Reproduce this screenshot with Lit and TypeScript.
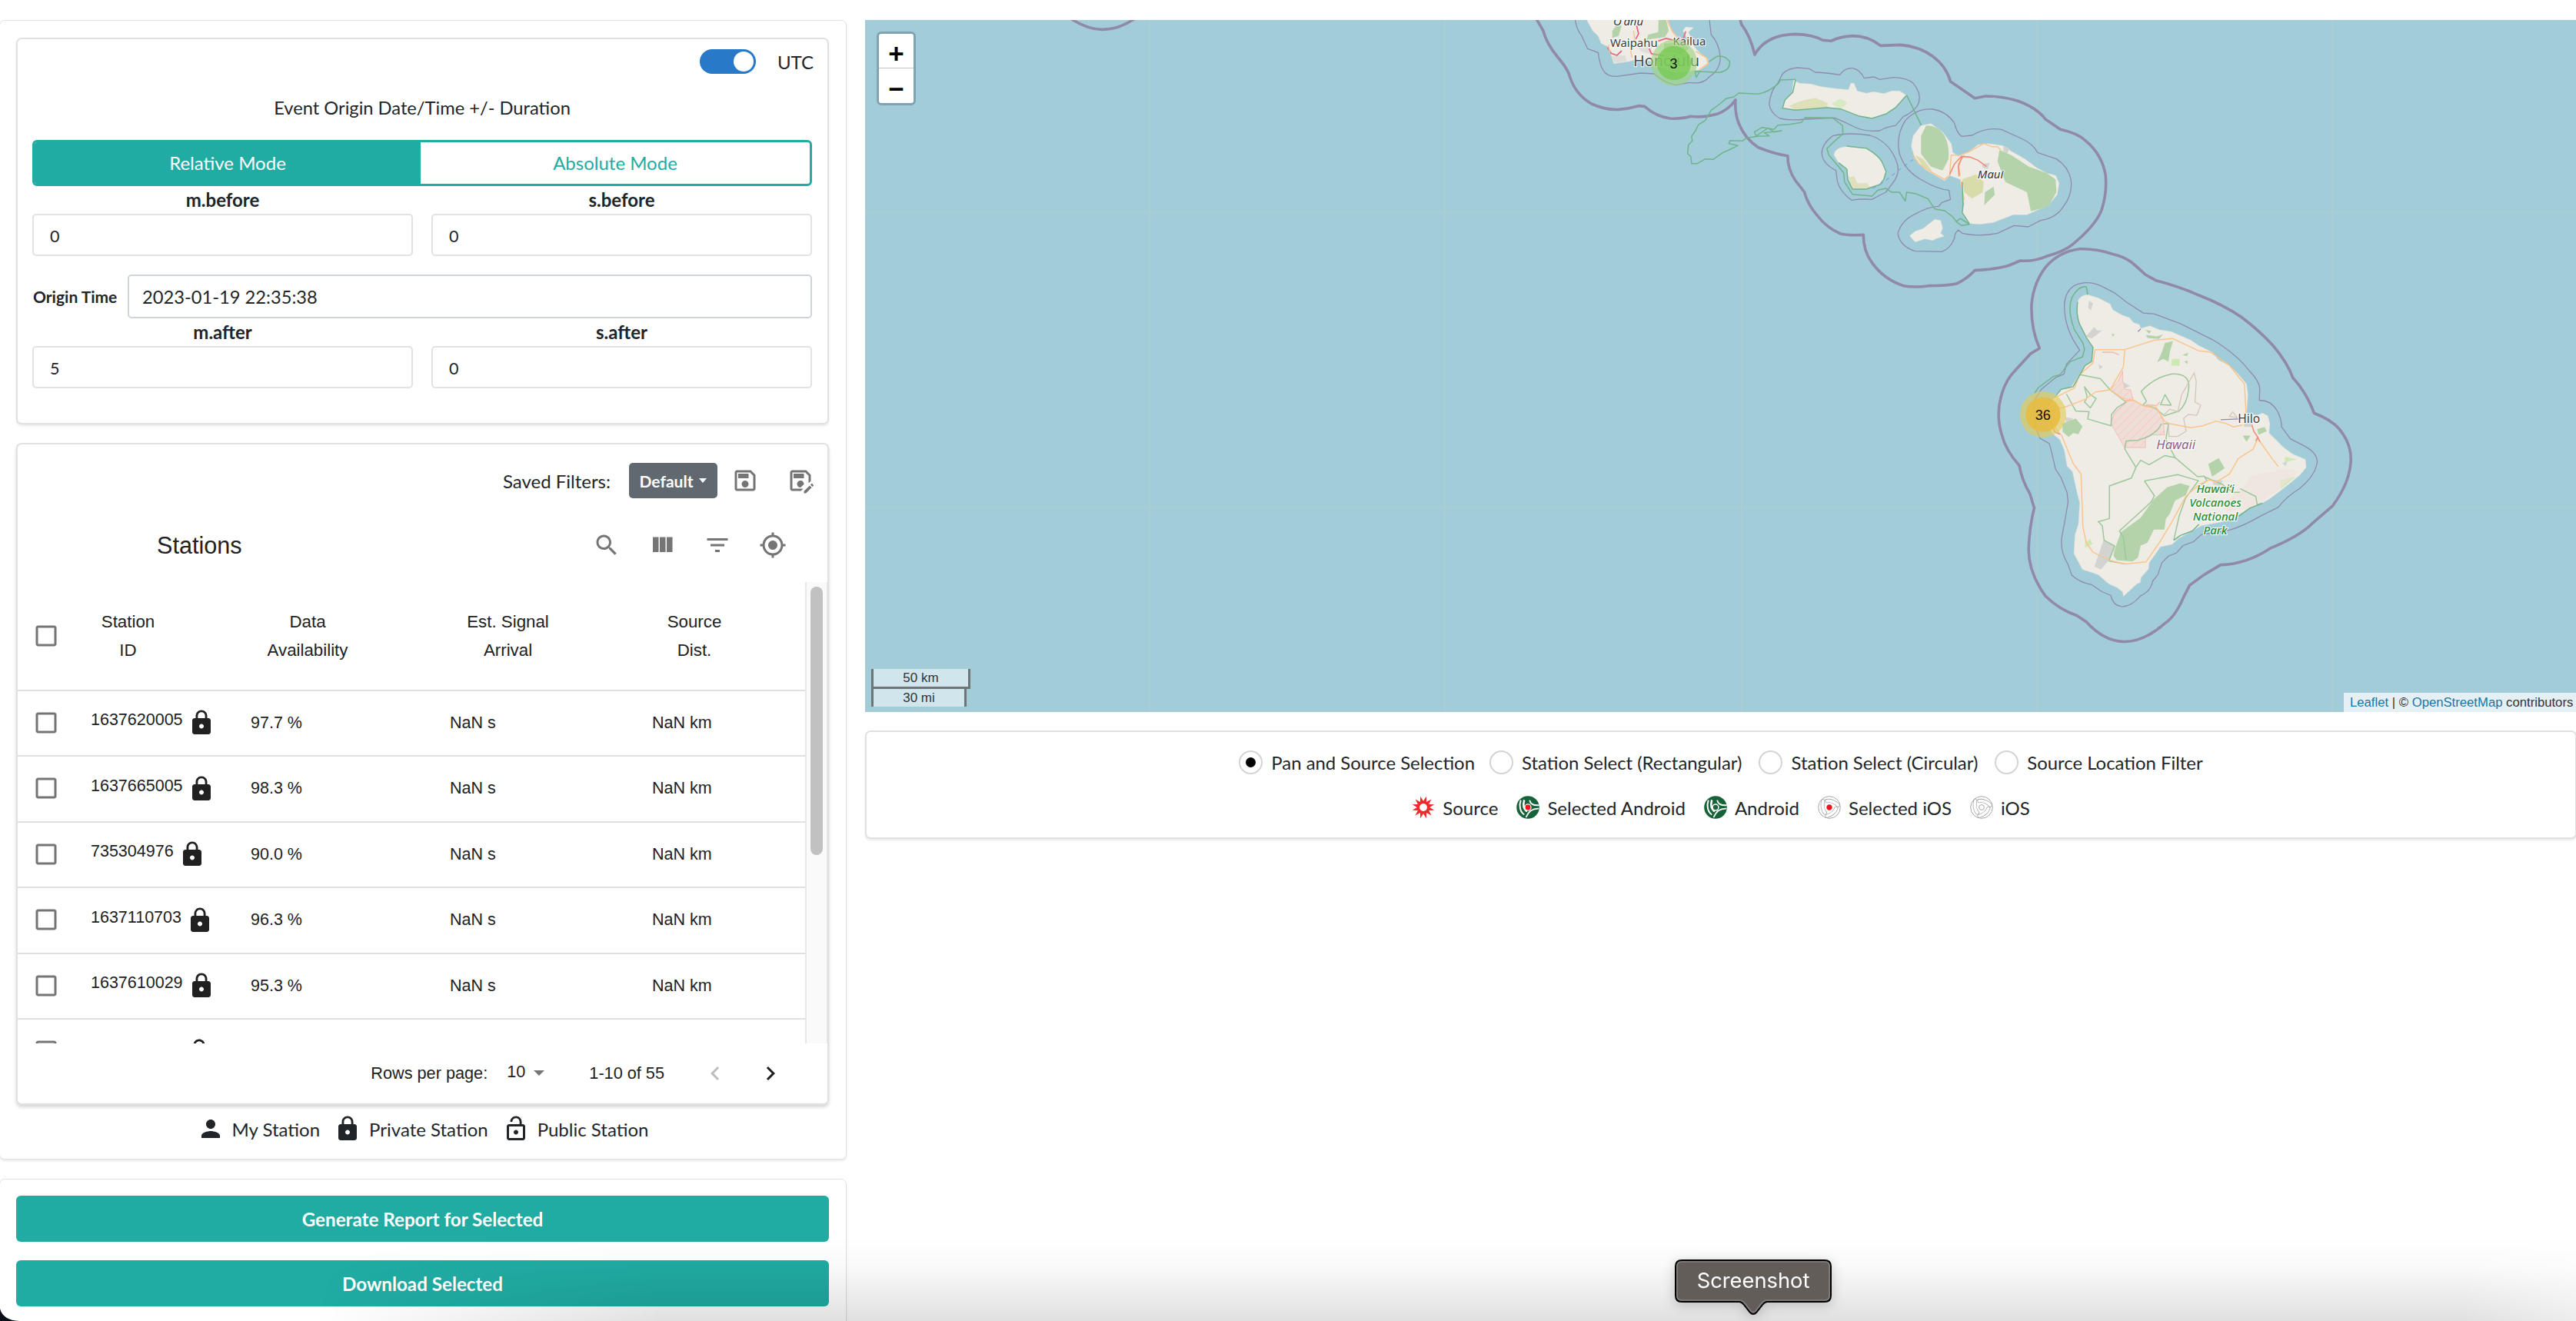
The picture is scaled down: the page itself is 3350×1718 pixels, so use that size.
import { LitElement, html, svg, css } from "lit";
import { customElement } from "lit/decorators.js";

const ICON = {
  save: "M17 3H5c-1.11 0-2 .9-2 2v14c0 1.1.89 2 2 2h14c1.1 0 2-.9 2-2V7l-4-4zm2 16H5V5h11.17L19 7.83V19zm-7-7c-1.66 0-3 1.34-3 3s1.34 3 3 3 3-1.34 3-3-1.34-3-3-3zM6 6h9v4H6V6z",
  saveAs: "M21 12.4V7l-4-4H5c-1.11 0-2 .9-2 2v14c0 1.1.89 2 2 2h7.4l2-2H5V5h11.17L19 7.83v6.57l2-2zM15 15c0 .06 0 .11-.01.16l-2.83 2.83c-.05.01-.1.01-.16.01-1.66 0-3-1.34-3-3s1.34-3 3-3 3 1.34 3 3zM6 6h9v4H6V6zm13.99 10.25 1.77 1.77L16.77 23H15v-1.77l4.99-4.98zm3.26.26-.85.85-1.77-1.77.85-.85c.2-.2.51-.2.71 0l1.06 1.06c.2.2.2.52 0 .71z",
  search: "M15.5 14h-.79l-.28-.27C15.41 12.59 16 11.11 16 9.5 16 5.91 13.09 3 9.5 3S3 5.91 3 9.5 5.91 16 9.5 16c1.61 0 3.09-.59 4.23-1.57l.27.28v.79l5 4.99L20.49 19l-4.99-5zm-6 0C7.01 14 5 11.99 5 9.5S7.01 5 9.5 5 14 7.01 14 9.5 11.99 14 9.5 14z",
  columns: "M10 18h5V5h-5v13zm-6 0h5V5H4v13zM16 5v13h5V5h-5z",
  filter: "M10 18h4v-2h-4v2zM3 6v2h18V6H3zm3 7h12v-2H6v2z",
  gps: "M12 8c-2.21 0-4 1.79-4 4s1.79 4 4 4 4-1.79 4-4-1.79-4-4-4zm8.94 3c-.46-4.17-3.77-7.48-7.94-7.94V1h-2v2.06C6.83 3.52 3.52 6.83 3.06 11H1v2h2.06c.46 4.17 3.77 7.48 7.94 7.94V23h2v-2.06c4.17-.46 7.48-3.77 7.94-7.94H23v-2h-2.06zM12 19c-3.87 0-7-3.13-7-7s3.13-7 7-7 7 3.13 7 7-3.13 7-7 7z",
  lock: "M18 8h-1V6c0-2.76-2.24-5-5-5S7 3.24 7 6v2H6c-1.1 0-2 .9-2 2v10c0 1.1.9 2 2 2h12c1.1 0 2-.9 2-2V10c0-1.1-.9-2-2-2zm-6 9c-1.1 0-2-.9-2-2s.9-2 2-2 2 .9 2 2-.9 2-2 2zm3.1-9H8.9V6c0-1.71 1.39-3.1 3.1-3.1 1.71 0 3.1 1.39 3.1 3.1v2z",
  lockOpen: "M12 17c1.1 0 2-.9 2-2s-.9-2-2-2-2 .9-2 2 .9 2 2 2zm6-9h-1V6c0-2.76-2.24-5-5-5S7 3.24 7 6h1.9c0-1.71 1.39-3.1 3.1-3.1 1.71 0 3.1 1.39 3.1 3.1v2H6c-1.1 0-2 .9-2 2v10c0 1.1.9 2 2 2h12c1.1 0 2-.9 2-2V10c0-1.1-.9-2-2-2zm0 12H6V10h12v10z",
  person: "M12 12c2.21 0 4-1.79 4-4s-1.79-4-4-4-4 1.79-4 4 1.79 4 4 4zm0 2c-2.67 0-8 1.34-8 4v2h16v-2c0-2.66-5.33-4-8-4z",
  box: "M19 5v14H5V5h14m0-2H5c-1.1 0-2 .9-2 2v14c0 1.1.9 2 2 2h14c1.1 0 2-.9 2-2V5c0-1.1-.9-2-2-2z",
  prev: "M15.41 7.41L14 6l-6 6 6 6 1.41-1.41L10.83 12z",
  next: "M10 6L8.59 7.41 13.17 12l-4.58 4.59L10 18l6-6z",
};

const icon = (d: string, cls = "") =>
  html`<svg class="icon ${cls}" viewBox="0 0 24 24"><path d=${d} /></svg>`;

/* ---------- station table ---------- */

const ROWS = [
  { id: "1637620005", avail: "97.7 %" },
  { id: "1637665005", avail: "98.3 %" },
  { id: "735304976", avail: "90.0 %" },
  { id: "1637110703", avail: "96.3 %" },
  { id: "1637610029", avail: "95.3 %" },
];

/* ---------- map artwork ---------- */

@customElement("station-map")
export class StationMap extends LitElement {
  static styles = css`
    :host {
      display: block;
      position: relative;
      width: 2225px;
      height: 900px;
      overflow: hidden;
      background: #a3ccd9;
      font-family: "Liberation Sans", Arial, sans-serif;
    }
    .art { display: block; width: 2225px; height: 900px; }
    .art path, .art line { vector-effect: non-scaling-stroke; }
    .sea { fill: none; stroke: #9189a8; stroke-width: 3.6; stroke-linejoin: round; }
    .coast { fill: none; stroke: #8f8bae; stroke-width: 1.3; stroke-linejoin: round; }
    .land { fill: #efece5; stroke: #d9dedb; stroke-width: 0.5; }
    .wood { fill: #b5d3aa; }
    .scrub { fill: #d8dcab; }
    .pale { fill: #cfe9b4; }
    .urban { fill: #d3d3d1; }
    .park { fill: none; stroke: #6fb48d; stroke-width: 1.5; stroke-linejoin: round; }
    .reserve { fill: none; stroke: #9bc79b; stroke-width: 1.5; stroke-linejoin: round; }
    .road { fill: none; stroke: #f9c58c; stroke-width: 1.5; stroke-linejoin: round; }
    .trunk { fill: none; stroke: #f28b79; stroke-width: 1.6; }
    .motor { fill: none; stroke: #e46a86; stroke-width: 1.8; }
    .mil { fill: url(#hatch); stroke: #f6bcb8; stroke-width: 1; }
    .tan { fill: none; stroke: #d5c6ba; stroke-width: 1.3; }
    .ferry { fill: none; stroke: #7b9fe8; stroke-width: 1.1; stroke-dasharray: 5 5; }
    .tile { stroke: #b4cfd2; stroke-width: 1; opacity: 0.6; }
    text {
      font-family: "Noto Sans", sans-serif;
      text-anchor: middle;
      paint-order: stroke;
      stroke: rgba(255, 255, 255, 0.75);
      stroke-width: 2.5px;
      stroke-linejoin: round;
      fill: #3c3c3c;
      font-size: 14.9px;
    }
    .city { font-size: 19.9px; fill: #4a4a4a; }
    .isl { font-style: italic; fill: #333; }
    .isl2 { font-style: italic; font-size: 16.6px; fill: #8d618b; }
    .np { font-style: italic; fill: #2d8f36; font-weight: 500; }
    .hilo { font-size: 15.6px; }
    .num { font-family: "Liberation Sans", Arial, sans-serif; font-size: 18px; fill: #111; stroke: none; }
    .zoom {
      position: absolute;
      left: 15px;
      top: 15px;
      width: 45px;
      border: 3px solid #7fa3b0;
      border-radius: 6px;
      background: #fff;
      overflow: hidden;
      font-weight: 700;
      font-size: 35px;
      color: #000;
    }
    .zoom span { display: block; height: 44px; line-height: 51px; text-align: center; }
    .zoom span + span { border-top: 1px solid #c4c4c4; height: 45px; line-height: 53px; }
    .scale { position: absolute; left: 8px; bottom: 7px; font-size: 17px; color: #333; text-align: center; }
    .bar { box-sizing: border-box; border: 3px solid #6e7577; background: rgba(255, 255, 255, 0.5); }
    .km { width: 129px; height: 26px; border-top: none; line-height: 23px; }
    .mi { width: 124px; height: 26px; margin-top: -3px; border-bottom: none; line-height: 23px; }
    .attr {
      position: absolute;
      right: 0;
      bottom: 0;
      height: 25px;
      line-height: 25px;
      width: 302px;
      box-sizing: border-box;
      padding-left: 8px;
      background: rgba(255, 255, 255, 0.7);
      font-size: 16.7px;
      color: #333;
      white-space: nowrap;
    }
    .attr a { color: #1b73a6; }
  `;

  private seas() {
    return svg`
      <path class="sea" transform="translate(1115 15) scale(.33333)" d="M830 26Q900 72 960 70Q1020 70 1085 26" />`;
  }

  private north() {
    return svg`<g transform="translate(1960 20) scale(.5102 .33333)">
      <path class="sea" d="M73 10L92 60Q100 110 130 165Q155 210 160 240Q175 310 215 345Q250 370 285 367Q310 364 335 353L350 355Q380 395 415 402Q445 405 468 394Q500 400 535 385Q565 368 582 330Q580 380 590 420Q605 480 640 515Q680 540 715 548Q715 600 735 645L758 690Q765 735 790 780Q815 830 850 852Q870 860 908 856Q908 920 930 965Q960 1030 1010 1055Q1040 1063 1075 1055Q1120 1055 1145 1047Q1170 1030 1192 995Q1250 990 1280 975L1308 957Q1340 962 1375 940Q1420 920 1440 895Q1500 820 1515 760Q1530 690 1525 620Q1515 540 1475 490Q1455 460 1410 445L1372 405Q1350 360 1300 333Q1260 315 1220 315L1192 323L1130 258Q1120 200 1085 160Q1050 120 1000 115L952 118Q920 80 880 80Q850 82 825 100L805 97Q780 75 735 73Q660 75 631 153Q620 80 597 35L593 10" />
      <path class="coast" d="M173 10Q175 50 190 80L205 130L232 145Q235 190 245 215Q255 240 280 238L340 225L375 228Q400 262 430 272L465 262Q500 270 515 240Q545 210 543 160Q540 110 520 75L515 10" />
      <path class="coast" d="M698 240Q705 210 740 204L770 208L785 222Q820 225 848 232Q860 205 880 206Q900 212 910 245L935 240L950 250L985 242Q1020 244 1035 265Q1055 300 1050 335Q1045 370 1010 395L990 430Q965 435 950 450Q910 455 885 435Q860 415 835 400L760 405Q720 412 695 402Q670 380 668 345Q672 290 690 265Z" />
      <path class="coast" d="M838 605Q805 580 802 540Q802 500 830 470Q870 455 925 468Q970 490 990 560Q1005 610 985 650L965 690Q945 705 930 718Q900 715 878 721Q850 690 842 650Z" />
      <path class="coast" d="M1000 540Q990 470 1015 410Q1045 360 1085 366Q1120 375 1140 420Q1145 455 1158 472L1185 468Q1220 435 1260 445L1310 480Q1340 500 1352 535L1400 560Q1430 590 1437 640Q1442 700 1418 745Q1400 790 1360 800L1328 825L1292 820L1250 850Q1200 865 1160 850L1150 838Q1140 850 1140 870Q1130 910 1108 922L1040 920Q1000 900 996 850Q1005 800 1040 775Q1075 745 1100 745L1108 730L1130 718L1126 682Q1100 680 1060 645Q1015 610 1000 540Z" />
      <path class="land" d="M200 10L218 60L232 80L240 110L258 122L272 188L310 180L330 172L370 180L380 200L430 225L492 212L512 190L512 172L490 145L470 110L440 92L420 60L408 10Z" />
      <path class="land" d="M448 60L455 45L475 48L462 65L468 85L458 88Z" />
      <path class="wood" d="M280 35L292 40L284 80L268 88L268 60ZM386 10L404 10L412 60L402 85L355 95L360 75L385 65ZM400 110L450 105L465 130L440 150L400 140Z" />
      <path class="urban" d="M265 160L300 155L305 178L275 185ZM330 110L370 115L365 150L340 140Z" opacity=".6" />
      <path class="motor" d="M330 40L335 72L328 92M385 100L405 90L420 95L448 98L455 62M362 130L368 150L400 158M256 125L265 148L280 156L292 138" />
      <path class="road" d="M322 60L326 100M408 20L420 60L440 100M312 110L318 165M258 115L262 145M480 140L508 165L512 188L490 212" />
      <path class="park" d="M480 218L540 223Q570 215 567 180Q555 155 535 160L515 180M478 215L482 242L492 215" />
      <path class="park" d="M735 250L697 252L690 268Q665 300 640 307L590 303L578 318L558 325L540 348L520 370L505 410L487 428L480 450L470 472L472 490L462 505L460 540L468 550L470 578L485 578L505 560L525 562L550 535L565 525L588 508L565 500L568 488L600 490L610 478L640 472L668 470L655 458L700 450L680 455L665 440L635 470L630 455L650 437L680 445L690 428L720 425L750 418L760 398L830 400L855 430L856 462L835 490L815 520L820 545L845 590L858 615L860 650L880 698L930 705L945 682L965 675L980 690L1000 690L1015 725L1018 690L1040 695L1072 715L1090 755L1115 762L1135 785L1145 805L1155 792L1178 815L1158 820L1145 805M1018 310L1056 430" />
      <path class="land" d="M730 252L745 265L775 268L800 278L835 285L870 290L876 265L884 265L892 295L915 304L935 298L960 305L980 295L1000 295L1018 312L990 360L965 385L930 402L895 392L850 365L815 360L770 366L735 368L702 362L708 330L726 305Z" />
      <path class="scrub" d="M718 355Q740 335 785 322L818 342L815 360L735 368Z" opacity=".75" />
      <path class="pale" d="M826 345L850 325L868 342L850 366Z" opacity=".75" />
      <path class="park" d="M735 252L728 300L708 330L702 362L735 370L815 360L850 365L895 392L930 402L965 385L990 360L1018 312" />
      <path class="land" d="M833 545Q835 515 865 512L915 518Q945 545 955 570L966 610L960 640L950 660L915 676L880 676L870 640L866 600L845 575Z" />
      <path class="scrub" d="M870 632L885 628L892 655L918 655L925 672L880 678Z" opacity=".7" />
      <path class="park" d="M865 510L915 518Q945 545 955 570L966 610L960 640L950 660L915 678L880 678L868 640L866 600L845 575" />
      <path class="ferry" d="M932 675L960 650L1000 602L1035 562" />
      <path class="land" d="M1055 430L1080 422L1110 455L1132 500L1136 535L1150 550L1175 535L1200 505L1225 500L1262 508L1285 530L1320 560L1350 595L1375 615L1398 625L1407 655L1402 700L1380 740L1325 778L1290 778L1240 808L1205 815L1180 812L1172 800L1160 770L1165 735L1155 640L1128 625L1115 645L1065 600L1040 560L1030 510L1035 470Z" />
      <path class="wood" d="M1068 430Q1100 430 1115 470Q1128 510 1125 560L1110 605L1080 590L1055 540L1055 470Z" />
      <path class="wood" d="M1255 525L1285 545L1330 590L1375 615L1398 640L1400 690L1380 745L1335 765L1325 690L1270 650L1250 570ZM1218 690L1240 668L1243 700L1216 740Z" />
      <path class="scrub" d="M1160 640L1195 620L1215 650L1212 690L1185 715L1165 690ZM1040 545L1060 560L1085 610L1060 590Z" />
      <path class="urban" d="M1265 508L1280 520L1275 540L1265 530ZM1210 580L1230 575L1225 600L1212 595Z" />
      <path class="road" d="M1128 620L1132 545L1155 545L1180 530L1215 500L1235 512L1250 512L1258 525M1155 640L1165 720M1035 545L1050 580L1080 610L1115 640L1130 620M1155 625L1150 580L1165 545" />
      <path class="trunk" d="M1128 620L1140 580L1158 550L1180 553L1200 565L1222 590M1152 628L1150 590L1160 550" />
      <path class="park" d="M1160 650L1162 740L1160 770L1178 812" />
      <path class="land" d="M1090 796L1105 800L1110 830L1105 850L1114 862L1095 870L1085 878L1065 872L1040 884L1026 860L1040 842L1060 832Z" />
    </g>`;
  }

  private bigIsland() {
    return svg`<g transform="translate(2560 310) scale(.34439)">
      <path class="sea" d="M268 415Q235 340 238 250Q245 170 290 110Q340 50 420 40Q480 38 540 58Q590 70 615 90Q645 115 668 137L710 160Q790 180 870 215Q960 250 1030 297Q1100 350 1150 405Q1205 470 1225 527Q1275 580 1305 660Q1370 685 1400 720Q1450 780 1443 850Q1435 930 1375 1010L1300 1075Q1250 1125 1140 1170Q1050 1230 952 1233L890 1270L835 1310L812 1355Q780 1430 740 1455Q660 1525 585 1523Q510 1520 445 1448L410 1425Q340 1400 290 1350Q225 1260 227 1170Q230 1090 248 1018L232 965Q200 910 192 858Q140 800 125 740Q105 670 120 610Q135 540 175 500L235 435Z" />
      <path class="coast" d="M420 422Q360 340 362 250Q365 200 400 178Q450 155 505 182L550 205L600 243L660 282L700 285L800 322L920 382Q1010 435 1060 500Q1100 540 1100 570L1098 612Q1140 610 1165 650Q1182 680 1182 712L1215 757L1270 785Q1325 815 1315 855Q1305 900 1250 945Q1200 975 1170 1015L1100 1050Q1040 1085 990 1100L935 1110L880 1118L850 1145L810 1160L785 1188L755 1200L730 1225L715 1270L695 1295Q690 1330 650 1350Q610 1395 575 1390Q545 1385 537 1348L505 1335L465 1308Q420 1300 390 1272L375 1230Q345 1180 352 1130L365 1060L376 995L372 960L350 905L328 870Q310 790 305 775L270 755Q240 700 250 610L275 570L330 525L360 513L370 475Z" />
      <path class="land" d="M412 240Q420 215 450 213L490 225L535 248L545 270L580 290L608 300L622 318L645 325L650 340L685 330L720 345L765 352L840 385L870 405L920 430L945 460L985 480L1020 515L1050 550L1055 590L1050 660L1090 668L1110 660L1130 670L1138 700L1135 735L1165 765L1190 790L1225 815L1272 835L1275 865L1250 895L1220 920L1175 955L1135 985L1100 1005L1060 1020L1010 1050L960 1070L880 1085L845 1105L790 1135L770 1155L725 1165L682 1225L680 1248L652 1280L648 1300L635 1305L585 1352L582 1335L560 1318L530 1305L490 1270L430 1250L398 1190L402 1120L415 1080L420 1000L410 960L392 880L372 860L362 800L345 760L315 735L300 690L300 640L330 590L350 570L385 565L405 535L440 480L465 465L470 412L440 370L418 320Q408 280 412 240Z" />
      <path class="urban" d="M443 370L475 335L485 348L505 348L465 378ZM455 235L470 245L462 272L452 262ZM510 1140L552 1160L535 1210L500 1250L475 1240ZM580 540L612 558L585 568ZM1040 690L1075 690L1070 712L1040 712ZM490 475L508 485L495 495ZM365 675L395 680L370 705ZM1185 850L1205 838L1198 860ZM920 912L960 915L950 935L925 930Z" />
      <path class="wood" d="M742 395L772 388L760 430L755 465L735 455L712 468L728 435ZM355 700L405 680L430 710L415 740L395 735L378 750L355 730ZM540 360L552 362L545 372ZM668 345L690 350L682 360ZM808 440L830 432L825 445ZM815 465L828 462L826 475ZM670 365L712 370L735 362L720 380L675 376Z" />
      <path class="wood" d="M550 1180L575 1110L650 1055L700 985L750 940L800 925L835 935L820 970L780 990L760 1040L745 1060L740 1100L700 1100L675 1150L650 1160L640 1205L620 1220L560 1215L548 1200ZM905 852L945 830L967 868L920 900ZM1090 720L1118 712L1126 728L1095 742ZM1035 745L1065 745L1050 768Z" />
      <path class="pale" d="M768 455L798 455L796 482L765 480ZM440 1150L460 1135L468 1155L440 1168ZM1175 915L1235 900L1180 945ZM1195 825L1240 835L1195 845Z" />
      <path fill="#efe3dc" opacity=".6" d="M1060 900L1190 870L1250 880L1170 950L1100 1000L1060 1020L980 1030L950 1010L1030 950Z" />
      <path class="mil" d="M582 500L583 540L592 570L612 572L622 610L585 605L535 572L565 540ZM598 615L625 612L660 632L715 645L735 690L740 742L695 742L668 755L668 790L590 790L538 700L550 660Z" />
      <path class="trunk" opacity=".45" d="M505 430L545 430L568 440M670 628L710 632L722 618" stroke-width="3" />
      <path class="reserve" d="M420 515L498 530L535 572L595 618L560 640L540 665L538 708L450 682L455 655L405 652L370 588M658 630L672 615L652 578Q700 525 770 512Q830 510 832 555Q830 620 795 652L740 670L700 638ZM725 628L742 590L765 630ZM438 560L460 590L482 605L460 640L438 618L448 600ZM738 700L755 700L745 760L780 828L742 820L682 855L650 838L632 865L590 795L595 765L640 762Q715 740 728 700M780 828L865 900L890 898L900 915L880 930M632 865L615 905L532 935L532 1058L490 1070L505 1085L512 1140L552 1162L530 1218L590 1230M664 916L790 892L868 915L820 980L795 1050L775 1140M664 916L702 972L690 995L570 1105L585 1130L595 1215M1025 945L1085 975L1090 1005L1110 1000M890 900L960 930L1000 960L1025 958" />
      <path class="tan" d="M740 665L760 645L790 655L805 590L852 508L860 540L855 618L877 630L862 668L830 665L812 680L822 728L790 748L757 748L755 705M985 672L998 655L1015 678Z" />
      <path class="road" d="M478 420L590 420L700 385L770 378L870 425L915 430L985 480L1042 550L1048 660M478 420L470 470L420 515L400 565L330 600M590 420L585 485L535 572L480 580L440 608L370 635L310 650M535 572L590 612L625 612L660 632L710 640L740 690L760 700L840 715L885 708L935 690L975 700L1000 712L1035 705M300 640L330 720L352 745L395 850L425 890L432 1090L445 1150L470 1185L530 1215L590 1230L670 1222L720 1150L760 1085L820 975L870 930L910 912L935 920L985 890L1018 832L1075 795L1092 755L1145 830L1170 862" />
      <path class="trunk" d="M1070 705L1078 730L1092 750L1085 765M1092 750L1100 768M310 690L325 730L345 740" />
      <path class="park" d="M450 212L445 183Q415 178 390 225Q372 270 400 345L432 395L438 420L430 448L385 465L345 515L320 522L262 565L250 585M412 240Q405 290 420 325L445 375L470 412L465 465L440 480L395 560L350 570L325 600M775 1140L800 1122L845 1105L870 1080M1020 1050L1060 1020L1110 1000" />
      <path class="coast" stroke="#7db0d8" d="M952 685L1020 682M640 352L650 342" />
    </g>`;
  }

  render() {
    return html`
      <svg class="art" viewBox="1125 26 2225 900">
        <defs>
          <pattern id="hatch" width="22" height="22" patternUnits="userSpaceOnUse" patternTransform="rotate(45)">
            <rect width="22" height="22" fill="#efddd7" />
            <rect width="3" height="22" fill="#f5cbc6" />
          </pattern>
        </defs>
        ${[1495.5, 1879.5, 2264.5, 2648.5, 3032.5].map((x) => svg`<line class="tile" x1=${x} x2=${x} y1="26" y2="926" />`)}
        ${[276.5, 660.5].map((y) => svg`<line class="tile" x1="1125" x2="3350" y1=${y} y2=${y} />`)}
        ${this.seas()} ${this.north()} ${this.bigIsland()}
        <text class="isl" x="2117.6" y="32.7">Oʻahu</text>
        <text x="2124.8" y="60.7">Waipahu</text>
        <text x="2197" y="58.7">Kailua</text>
        <text class="city" x="2167" y="86">Honolulu</text>
        <text class="isl" x="2588.6" y="232">Maui</text>
        <text class="isl2" x="2829.7" y="583.8">Hawaii</text>
        <text class="hilo" x="2924.7" y="550">Hilo</text>
        <text class="np" x="2881" y="641">Hawaiʻi</text>
        <text class="np" x="2881" y="659">Volcanoes</text>
        <text class="np" x="2881" y="677">National</text>
        <text class="np" x="2881" y="695">Park</text>
        <circle cx="2177" cy="81.5" r="30" fill="#9fd47c" opacity=".62" />
        <circle cx="2177" cy="82" r="22.3" fill="#74cb52" opacity=".78" />
        <text class="num" x="2176.5" y="89">3</text>
        <circle cx="2657" cy="539" r="30" fill="#e0cc5c" opacity=".66" />
        <circle cx="2657" cy="539" r="22.6" fill="#e8bb3d" opacity=".84" />
        <text class="num" x="2656.8" y="545.5">36</text>
      </svg>
      <div class="zoom"><span>+</span><span>−</span></div>
      <div class="scale">
        <div class="bar km">50 km</div>
        <div class="bar mi">30 mi</div>
      </div>
      <div class="attr"><a>Leaflet</a> | © <a>OpenStreetMap</a> contributors</div>
    `;
  }
}

/* ---------- legend symbols ---------- */

const burst = () => {
  const pts: string[] = [];
  for (let i = 0; i < 24; i++) {
    const a = ((i * 15 + 15) * Math.PI) / 180;
    const r = i % 2 ? 8.2 : 14.8;
    pts.push(`${(15 + r * Math.sin(a)).toFixed(2)},${(15 - r * Math.cos(a)).toFixed(2)}`);
  }
  return html`<svg class="sym" viewBox="0 0 30 30">
    <polygon points=${pts.join(" ")} fill="#ee2a2c" />
    <circle cx="15" cy="15" r="4.9" fill="#fff" />
  </svg>`;
};

const adapter = (android: boolean, selected: boolean) => html`<svg class="sym" viewBox="0 0 30 30">
  ${android
    ? svg`<circle cx="15" cy="15" r="14.8" fill="#16633a" />
        <g fill="none" stroke="#fff" stroke-linecap="round">
          <path d="M5.6 6.4C3.4 12 4.6 20.5 9.6 24" stroke-width="2" />
          <path d="M10 6.4C9 10.5 9 16.5 13 19.6" stroke-width="2.6" />
          <path d="M17.4 6.4C18.6 10.6 22 12.6 28.8 12.2" stroke-width="1.9" />
          <path d="M28.4 16.6C20.5 16.4 15.5 21 12.8 27.4" stroke-width="1.7" />
        </g>
        <circle cx="15" cy="15" r="3.9" fill="#16633a" stroke="#fff" stroke-width="1.5" />`
    : svg`<circle cx="15" cy="15" r="14.3" fill="#fff" stroke="#a6a6a6" stroke-width="1" />
        ${[0, 120, 240].map((r) => svg`<g transform="rotate(${r} 15 15)" fill="none" stroke-linecap="round">
          <path d="M6.8 6.8C5.4 11.5 6 18 9.4 22" stroke="#a6a6a6" stroke-width="5.2" />
          <path d="M6.8 6.8C5.4 11.5 6 18 9.4 22" stroke="#fff" stroke-width="3.6" /></g>`)}
        <circle cx="15" cy="15" r="3.4" fill="#fff" stroke="#a6a6a6" stroke-width="1" />`}
  ${selected ? svg`<circle cx="15" cy="15" r="3.4" fill="#f5121d" />` : ""}
</svg>`;

/* ---------- page ---------- */

@customElement("app-root")
export class AppRoot extends LitElement {
  static styles = css`
    :host {
      display: block;
      position: relative;
      width: 3350px;
      height: 1718px;
      overflow: hidden;
      background: #fff;
      color: #212529;
      font: 24px "Lato", sans-serif;
      white-space: nowrap;
    }
    * { box-sizing: border-box; }
    .page { display: flex; gap: 24px; padding-top: 26px; }
    .side { width: 1102px; margin-left: -1px; flex: none; display: flex; flex-direction: column; gap: 25px; }
    .card { border: 2px solid #e0e1e2; border-radius: 7px; background: #fff; box-shadow: 0 2px 3px rgba(34, 36, 38, 0.1); }
    .outer { height: 1482px; padding: 22px 22px 0 21px; border-width: 1px; }
    .time { height: 503px; padding: 13px 20px 0 19px; }
    .utc { display: flex; justify-content: flex-end; align-items: center; height: 32px; gap: 28px; margin-right: -2px; }
    .toggle { width: 73px; height: 32px; border-radius: 16px; background: #2879c8; display: flex; justify-content: flex-end; padding: 3px; }
    .knob { width: 26px; height: 26px; border-radius: 50%; background: #fff; }
    .title { height: 40px; line-height: 40px; margin-top: 24px; text-align: center; font-size: 23.7px; }
    .modes { display: flex; margin-top: 22px; height: 60px; border: 3px solid #20aca3; border-radius: 6px; overflow: hidden; }
    .modes div { flex: 1; line-height: 54px; text-align: center; color: #20aca3; }
    .modes .on { flex: none; width: 502px; background: #20aca3; color: #fff; }
    .pair { display: grid; grid-template-columns: 1fr 1fr; gap: 0 24px; }
    .lab { height: 36px; line-height: 36px; text-align: center; font-weight: 700; }
    .inp { height: 55px; line-height: 54px; border: 2px solid #e2e2e3; border-radius: 5px; padding-left: 21px; font-size: 21.5px; }
    .origin { display: flex; align-items: center; justify-content: space-between; margin-top: 24px; height: 57px; }
    .origin b { font-size: 21px; margin-left: 1px; }
    .origin .inp { width: 890px; height: 57px; line-height: 54px; border-color: #ced4da; font-size: 23.7px; padding-left: 17px; }
    .stations { height: 861px; margin-top: 24px; box-shadow: 0 3px 4px rgba(34, 36, 38, 0.18); }
    .filters { display: flex; align-items: center; height: 46px; margin: 24px 17px 0 0; justify-content: flex-end; }
    .drop {
      width: 115px; height: 46px; border-radius: 5px; background: #616970; color: #fff; font-size: 21px; font-weight: 700;
      display: flex; align-items: center; justify-content: center; gap: 8px; margin: 0 18px 0 24px;
    }
    .drop::after { content: ""; border: 5.5px solid transparent; border-top: 6px solid #fff; border-bottom: 0; }
    .icon { width: 36px; height: 36px; fill: #757575; flex: none; display: block; }
    .gap { margin-left: 36px; }
    .tools { display: flex; align-items: center; height: 36px; margin: 43px 53px 30px 181px; font: 30.6px "Liberation Sans", Arial, sans-serif; color: #212121; }
    .tools span { flex: 1; }
    .scroller { display: flex; height: 600px; overflow: hidden; font: 21.5px "Liberation Sans", Arial, sans-serif; color: #212121; }
    .table { flex: 1; }
    .row { display: grid; grid-template-columns: 76px 208px 259px 263px 1fr; padding-left: 19px; height: 85.5px; align-items: center; border-bottom: 2px solid #e0e0e0; }
    .row > .icon:first-child { margin-top: -1px; }
    .head { height: 141.5px; line-height: 37px; font-size: 22.3px; text-align: center; }
    .head > .icon:first-child { margin-top: 0; }
    .w1 { width: 97px; }
    .w2 { width: 148px; }
    .w3 { width: 151px; }
    .w4 { width: 110px; }
    .id { display: flex; align-items: center; gap: 6px; }
    .id span { margin-top: -7px; }
    .dark { fill: #212121; }
    .held { width: 117px; }
    .rail { width: 29px; background: #fafafa; border-left: 2px solid #e8e8e8; border-right: 1px solid #e8e8e8; padding: 6px 5px; }
    .thumb { height: 349px; width: 15.5px; border-radius: 8px; background: #c1c1c1; }
    .foot { display: flex; align-items: center; height: 77px; justify-content: flex-end; padding-right: 56px; font: 21.7px "Liberation Sans", Arial, sans-serif; color: #212121; }
    .foot .ten { margin-left: 25px; margin-top: -3px; }
    .foot .tri { border: 7.5px solid transparent; border-top: 7.5px solid #757575; border-bottom: 0; margin: 0 58px 0 11px; }
    .foot .dis { fill: #bdbdbd; margin-left: 48px; }
    .kinds { display: flex; align-items: center; justify-content: center; height: 36px; margin-top: 13px; gap: 10px; }
    .kinds .icon { fill: #212529; }
    .kinds span + .icon { margin-left: 8px; }
    .actions { height: 220px; padding: 21px 22px 0 21px; border-width: 1px; display: flex; flex-direction: column; gap: 24px; }
    .btn { height: 60px; line-height: 61px; border-radius: 6px; background: #20aca3; color: #fff; text-align: center; font-weight: 700; font-size: 24.2px; }
    .main { width: 2226px; flex: none; }
    .legend { margin-top: 24px; height: 141px; display: flex; flex-direction: column; align-items: center; padding-top: 21px; }
    .line { display: flex; align-items: center; height: 36px; }
    .line + .line { margin-top: 23px; }
    .line:first-child { font-size: 23.9px; }
    .radio { width: 31px; height: 31px; border: 2px solid #d4d4d5; border-radius: 50%; margin-right: 11px; display: flex; align-items: center; justify-content: center; }
    .radio.on::after { content: ""; width: 13px; height: 13px; border-radius: 50%; background: #000; }
    .opt { margin-right: 22px; }
    .opt:first-of-type { margin-right: 19px; }
    .opt:last-child, .sy:last-child { margin-right: 0; }
    .sym { width: 30px; height: 30px; margin-right: 10px; display: block; }
    .sy { margin-right: 24px; }
    .shade {
      position: absolute; left: 0; right: 0; bottom: 0; height: 110px;
      background: linear-gradient(to bottom, rgba(0,0,0,0), rgba(0,0,0,0.02) 35%, rgba(0,0,0,0.12));
      -webkit-mask-image: linear-gradient(to right, transparent 410px, #000 860px, #000 3200px, rgba(0,0,0,.6));
      mask-image: linear-gradient(to right, transparent 410px, #000 860px, #000 3200px, rgba(0,0,0,.6));
    }
    .corner { position: absolute; left: 0; bottom: 0; width: 25px; height: 16px; display: block; }
    .tip { position: absolute; left: 2170px; top: 1630px; width: 220px; height: 88px; display: block; filter: drop-shadow(0 3px 8px rgba(0, 0, 0, 0.2)); }
    .tip text { font: 27.3px "Inter", sans-serif; fill: #fff; text-anchor: middle; }
  `;

  render() {
    const radios = ["Pan and Source Selection", "Station Select (Rectangular)", "Station Select (Circular)", "Source Location Filter"];
    return html`
      <div class="page">
        <div class="side">
          <div class="card outer">
            <div class="card time">
              <div class="utc"><div class="toggle"><div class="knob"></div></div><span>UTC</span></div>
              <div class="title">Event Origin Date/Time +/- Duration</div>
              <div class="modes"><div class="on">Relative Mode</div><div>Absolute Mode</div></div>
              <div class="pair">
                <div class="lab">m.before</div><div class="lab">s.before</div>
                <div class="inp">0</div><div class="inp">0</div>
              </div>
              <div class="origin"><b>Origin Time</b><div class="inp">2023-01-19 22:35:38</div></div>
              <div class="pair">
                <div class="lab">m.after</div><div class="lab">s.after</div>
                <div class="inp">5</div><div class="inp">0</div>
              </div>
            </div>
            <div class="card stations">
              <div class="filters">
                <span>Saved Filters:</span><div class="drop">Default</div>${icon(ICON.save)}${icon(ICON.saveAs, "gap")}
              </div>
              <div class="tools">
                <span>Stations</span>${icon(ICON.search)}${icon(ICON.columns, "gap")}${icon(ICON.filter, "gap")}${icon(ICON.gps, "gap")}
              </div>
              <div class="scroller">
                <div class="table">
                  <div class="row head">
                    ${icon(ICON.box)}
                    <div class="w1">Station<br />ID</div>
                    <div class="w2">Data<br />Availability</div>
                    <div class="w3">Est. Signal<br />Arrival</div>
                    <div class="w4">Source<br />Dist.</div>
                  </div>
                  ${ROWS.map(
                    (r) => html`<div class="row">
                      ${icon(ICON.box)}
                      <div class="id"><span>${r.id}</span>${icon(ICON.lock, "dark")}</div>
                      <div>${r.avail}</div>
                      <div>NaN s</div>
                      <div>NaN km</div>
                    </div>`
                  )}
                  <div class="row">${icon(ICON.box)}<div class="id"><span class="held"></span>${icon(ICON.lock, "dark")}</div></div>
                </div>
                <div class="rail"><div class="thumb"></div></div>
              </div>
              <div class="foot">
                <span>Rows per page:</span><span class="ten">10</span><span class="tri"></span><span>1-10 of 55</span>
                ${icon(ICON.prev, "dis")}${icon(ICON.next, "dark gap")}
              </div>
            </div>
            <div class="kinds">
              ${icon(ICON.person)}<span>My Station</span>${icon(ICON.lock)}<span>Private Station</span>${icon(ICON.lockOpen)}<span>Public Station</span>
            </div>
          </div>
          <div class="card actions">
            <div class="btn">Generate Report for Selected</div>
            <div class="btn">Download Selected</div>
          </div>
        </div>
        <div class="main">
          <station-map></station-map>
          <div class="card legend">
            <div class="line">
              ${radios.map((t, i) => html`<div class="radio ${i ? "" : "on"}"></div><span class="opt">${t}</span>`)}
            </div>
            <div class="line">
              ${burst()}<span class="sy">Source</span>
              ${adapter(true, true)}<span class="sy">Selected Android</span>
              ${adapter(true, false)}<span class="sy">Android</span>
              ${adapter(false, true)}<span class="sy">Selected iOS</span>
              ${adapter(false, false)}<span class="sy">iOS</span>
            </div>
          </div>
        </div>
      </div>
      <div class="shade"></div>
      <svg class="corner" viewBox="0 0 25 16"><path d="M0 0Q4 15 25 16H0Z" fill="#0b0f1a" /></svg>
      <svg class="tip" viewBox="2170 1630 220 88">
        <path d="M2187 1639H2373Q2381 1639 2381 1647V1685Q2381 1693 2373 1693H2298Q2295 1693 2292 1697L2284 1707Q2280 1711 2276 1707L2268 1697Q2265 1693 2262 1693H2187Q2179 1693 2179 1685V1647Q2179 1639 2187 1639Z" fill="#635d5a" stroke="#000" stroke-width="2" />
        <path d="M2187 1641H2373Q2379 1641 2379 1647V1685Q2379 1691 2373 1691H2298Q2294 1691 2290 1696L2283 1705Q2280 1708 2277 1705L2270 1696Q2266 1691 2262 1691H2187Q2181 1691 2181 1685V1647Q2181 1641 2187 1641Z" fill="none" stroke="#857f7d" stroke-width="1.6" />
        <text x="2280" y="1674.5">Screenshot</text>
      </svg>
    `;
  }
}
